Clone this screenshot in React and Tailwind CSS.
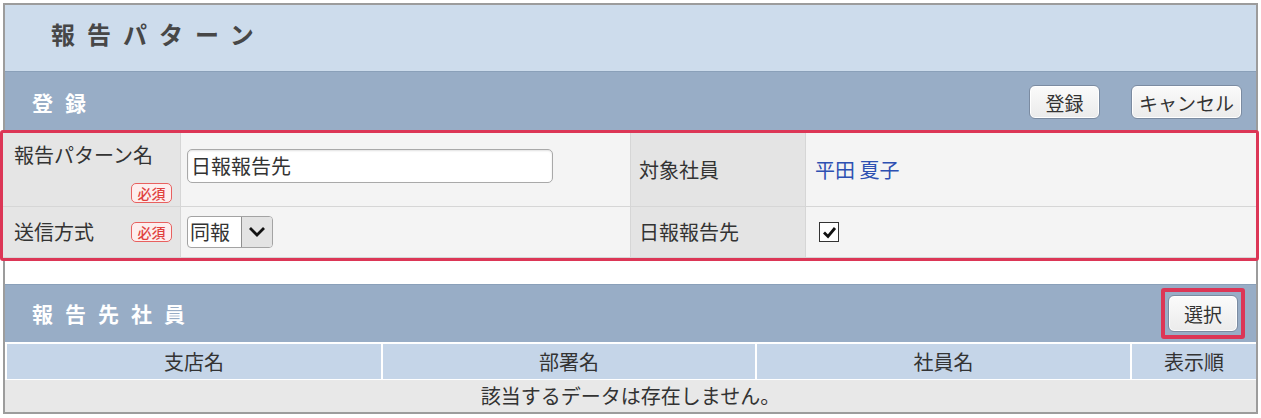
import React from "react";

const font = { fontFamily: '"Noto Sans CJK JP", "Noto Sans", sans-serif' };

// Small red "必須" (required) marker
const Required = () => (
  <span className="inline-flex h-[20px] w-[41px] items-center justify-center rounded-[5px] border border-[#e8605f] bg-[#fdeeee] text-[14px] font-medium leading-none text-[#e0403e]">
    必須
  </span>
);

// Grey rounded push button used in the section bars
const Btn = ({ children, className = "" }) => (
  <button
    className={`flex h-[34px] items-center justify-center rounded-[6px] border border-[#7b8ba1] bg-gradient-to-b from-[#fbfbfb] to-[#ebebeb] text-[19px] leading-none text-[#333] shadow-[inset_0_0_0_1px_#ffffff] ${className}`}
  >
    {children}
  </button>
);

const App = () => {
  const columns = ["支店名", "部署名", "社員名", "表示順"];

  return (
    <div className="h-[418px] w-[1261px] bg-white pt-[3px]" style={font}>
      <div className="ml-[3px] w-[1255px] border-2 border-[#9c9c9c] bg-white">
        {/* Page title */}
        <div className="flex h-[67px] items-center border-b border-[#8aa0b9] bg-[#cddcec] pb-[8px] pl-[46px]">
          <span className="text-[24px] font-bold leading-none tracking-[12px] text-[#474747]">
            報告パターン
          </span>
        </div>

        {/* Registration bar */}
        <div className="flex h-[58px] items-center justify-between bg-[#98adc6] pl-[27px] pr-[14px]">
          <span className="pt-[3px] text-[21px] font-bold leading-none tracking-[12px] text-white">
            登録
          </span>
          <div className="flex gap-[31px] pt-[2px]">
            <Btn className="w-[71px]">登録</Btn>
            <Btn className="w-[111px]">キャンセル</Btn>
          </div>
        </div>

        {/* Highlighted form */}
        <div className="-ml-[5px] -mr-[3px] rounded-[3px] border-[3px] border-[#dc3656]">
          <div className="grid grid-cols-[178px_450px_175px_1fr] text-[20px] leading-none text-[#333]">
            {/* Row 1 */}
            <div className="flex h-[74px] flex-col border-b border-r border-[#d6d6d6] bg-[#e5e5e5] pl-[11px] pr-[8px] pt-[9px]">
              <span className="leading-[26px]">報告パターン名</span>
              <div className="mt-[15px] flex justify-end">
                <Required />
              </div>
            </div>
            <div className="flex h-[74px] items-start border-b border-r border-[#d6d6d6] bg-[#f4f4f4] pl-[6px] pt-[16px]">
              <div className="flex h-[34px] w-[366px] items-center rounded-[5px] border border-[#a9a9a9] bg-white pl-[3px] shadow-[inset_0_1px_2px_rgba(0,0,0,0.12)]">
                日報報告先
              </div>
            </div>
            <div className="flex h-[74px] items-center border-b border-r border-[#d6d6d6] bg-[#e4e4e4] pl-[8px]">
              対象社員
            </div>
            <div className="flex h-[74px] items-center border-b border-[#d6d6d6] bg-[#f4f4f4] pl-[9px] text-[#2d50b2]">
              平田 夏子
            </div>

            {/* Row 2 */}
            <div className="flex h-[51px] items-center justify-between border-b border-r border-[#d6d6d6] bg-[#e5e5e5] pl-[11px] pr-[8px]">
              <span>送信方式</span>
              <Required />
            </div>
            <div className="flex h-[51px] items-center border-b border-r border-[#d6d6d6] bg-[#f4f4f4] pl-[6px]">
              <div className="flex h-[32px] w-[86px] items-stretch overflow-hidden rounded-[4px] border border-[#a3a3a3] bg-white">
                <span className="flex flex-1 items-center pl-[2px]">同報</span>
                <span className="flex w-[31px] items-center justify-center border-l border-[#8f8f8f] bg-[#e3e3e3]">
                  <svg width="18" height="12" viewBox="0 0 18 12">
                    <path d="M2 2 L9 9 L16 2" fill="none" stroke="#111" strokeWidth="2.8" />
                  </svg>
                </span>
              </div>
            </div>
            <div className="flex h-[51px] items-center border-b border-r border-[#d6d6d6] bg-[#e4e4e4] pl-[8px]">
              日報報告先
            </div>
            <div className="flex h-[51px] items-center border-b border-[#d6d6d6] bg-[#f4f4f4] pl-[13px]">
              <span className="flex h-[20px] w-[20px] items-center justify-center border border-[#333] bg-white">
                <svg width="15" height="13" viewBox="0 0 15 13">
                  <path d="M2 6.5 L6 10.5 L13 2" fill="none" stroke="#111" strokeWidth="2.8" />
                </svg>
              </span>
            </div>
          </div>
        </div>

        <div className="h-[23px] bg-white" />

        {/* Report recipients bar */}
        <div className="flex h-[58px] items-center justify-between border-t border-[#8aa0b9] bg-[#98adc6] pl-[27px] pr-[11px]">
          <span className="text-[21px] font-bold leading-none tracking-[12px] text-white">
            報告先社員
          </span>
          <div className="rounded-[3px] border-[4px] border-[#dc3656] p-[3px]">
            <Btn className="h-[37px] w-[70px]">選択</Btn>
          </div>
        </div>

        {/* Recipients table */}
        <div className="grid grid-cols-[376px_374px_375px_1fr] border-t-2 border-white bg-[#c5d5e8] text-[20px] leading-none text-[#333]">
          {columns.map((col) => (
            <div
              key={col}
              className="flex h-[35px] items-center justify-center border-l-2 border-white"
            >
              {col}
            </div>
          ))}
        </div>
        <div className="flex h-[33px] items-center justify-center border-t border-white bg-[#e8e8e8] text-[20px] leading-none text-[#333]">
          該当するデータは存在しません。
        </div>
      </div>
    </div>
  );
};

export default App;
